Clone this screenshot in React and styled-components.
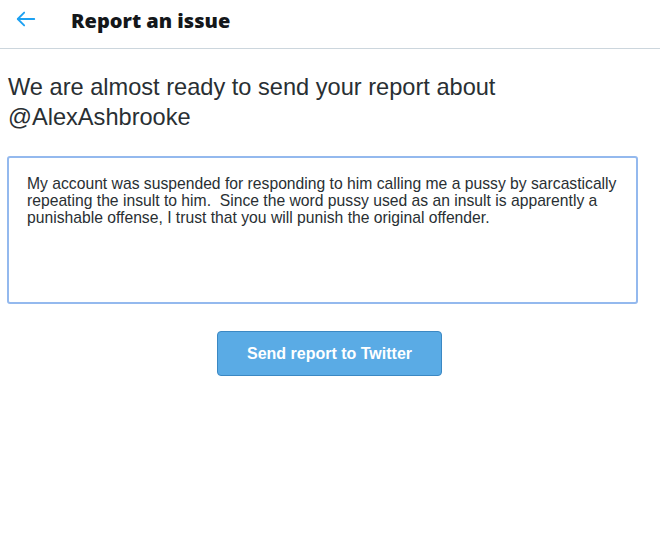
import React from "react";
import styled, { createGlobalStyle } from "styled-components";

const GlobalStyle = createGlobalStyle`
  body {
    margin: 0;
    background: #fff;
    font-family: "Liberation Sans", Arial, sans-serif;
  }
`;

const Page = styled.div`
  width: 660px;
  min-height: 539px;
  background: #fff;
`;

const Header = styled.header`
  display: flex;
  align-items: center;
  height: 49px;
  box-sizing: border-box;
  border-bottom: 1px solid #ccd6dd;
  padding-left: 14px;
`;

const BackButton = styled.button`
  display: flex;
  align-items: center;
  justify-content: center;
  width: 24px;
  height: 24px;
  padding: 0;
  margin-top: -10px;
  border: none;
  background: none;
  cursor: pointer;
`;

const Title = styled.h1`
  margin: -7px 0 0 33px;
  font-family: "Open Sans", "Liberation Sans", sans-serif;
  font-size: 20px;
  font-weight: 800;
  color: #14171a;
`;

const Content = styled.main`
  padding: 23px 22px 0 8px;
`;

const Lead = styled.p`
  margin: 0;
  font-size: 23.6px;
  line-height: 30px;
  color: #292f33;
`;

const ReportBox = styled.textarea`
  display: block;
  width: 631px;
  height: 148px;
  box-sizing: border-box;
  margin: 24px 0 0 -1px;
  padding: 17px 18px;
  border: 2px solid #94b9ee;
  border-radius: 3px;
  font-family: "Liberation Sans", Arial, sans-serif;
  font-size: 15.7px;
  line-height: 17px;
  color: #292f33;
  resize: none;
  outline: none;
`;

const Actions = styled.div`
  display: flex;
  justify-content: center;
  margin-top: 27px;
  margin-right: -13px;
`;

const SendButton = styled.button`
  width: 225px;
  height: 45px;
  border: 1px solid #3b88c3;
  border-radius: 4px;
  background: #5aabe5;
  color: #fff;
  font-family: "Liberation Sans", Arial, sans-serif;
  font-size: 16px;
  font-weight: bold;
  cursor: pointer;
`;

const reportText =
  "My account was suspended for responding to him calling me a pussy by sarcastically repeating the insult to him.  Since the word pussy used as an insult is apparently a punishable offense, I trust that you will punish the original offender.";

export default function App() {
  return (
    <Page>
      <GlobalStyle />
      <Header>
        <BackButton aria-label="Back">
          <svg width="22" height="22" viewBox="0 0 24 24" fill="none" stroke="#1da1f2" strokeWidth="2" strokeLinecap="round" strokeLinejoin="round">
            <path d="M21 12H3.5" />
            <path d="M10 5l-7 7 7 7" />
          </svg>
        </BackButton>
        <Title>Report an issue</Title>
      </Header>
      <Content>
        <Lead>We are almost ready to send your report about @AlexAshbrooke</Lead>
        <ReportBox defaultValue={reportText} />
        <Actions>
          <SendButton>Send report to Twitter</SendButton>
        </Actions>
      </Content>
    </Page>
  );
}
